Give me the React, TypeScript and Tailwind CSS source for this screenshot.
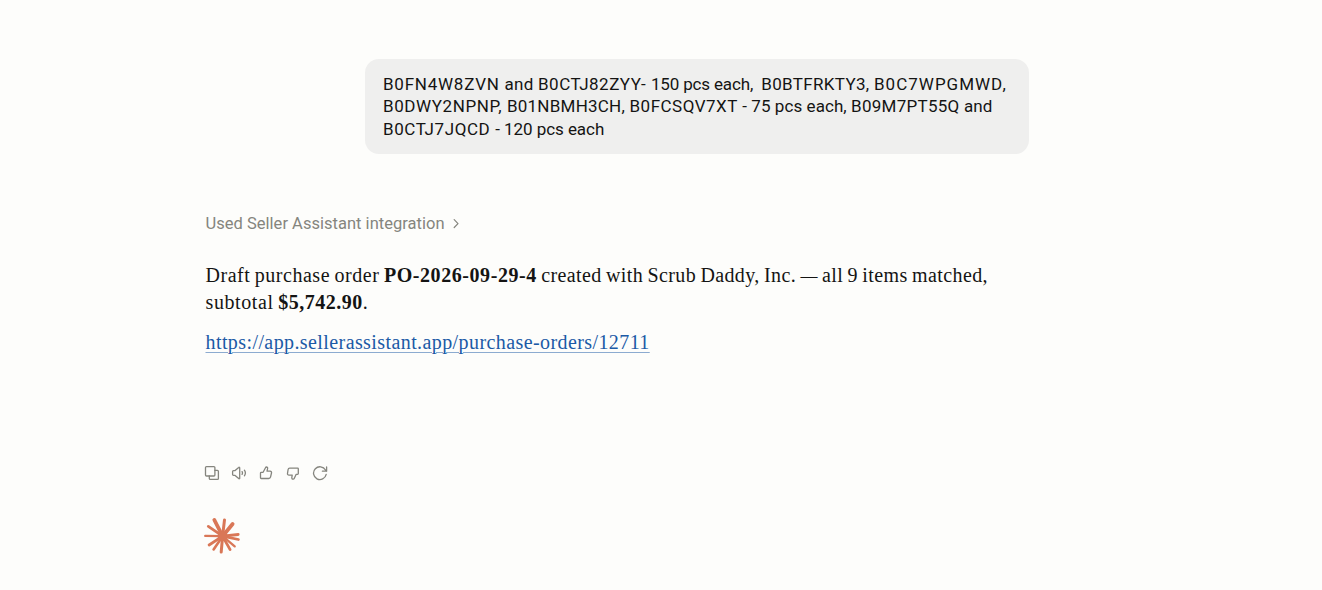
import React from "react";

function Icon({ children }: { children: React.ReactNode }) {
  return (
    <svg viewBox="0 0 16 16" className="h-4 w-4 shrink-0" fill="none" stroke="currentColor" strokeWidth={1.3} strokeLinecap="round" strokeLinejoin="round">
      {children}
    </svg>
  );
}

function MessageActions() {
  return (
    <div className="flex items-center gap-[11px] text-[#85857e]">
      <Icon>
        <rect x="1.5" y="1.6" width="9.4" height="9.4" rx="1" />
        <path d="M10.9 5.4h2.5a1 1 0 0 1 1 1v7a1 1 0 0 1-1 1H6.3a1 1 0 0 1-1-1V11" />
      </Icon>
      <Icon>
        <path d="M1.6 6.5c0-.5.4-.9.9-.9h1.6l3.6-3.2c.4-.4 1-.1 1 .4v10.4c0 .5-.6.8-1 .4l-3.6-3.2H2.5a.9.9 0 0 1-.9-.9z" />
        <path d="M11.1 6.6c.5.9.5 1.9 0 2.8M13.4 5.2c1.2 1.7 1.2 3.9 0 5.6" />
      </Icon>
      <Icon>
        <path d="M3.2 7.3h1.9l2.4-4.6c.2-.4.5-.7.9-.7.9 0 1.4.8 1.2 1.6L9 6.2h3.1c1 0 1.7.9 1.4 1.8l-1 4.2c-.2.8-.9 1.3-1.7 1.3H3.2a.7.7 0 0 1-.7-.7V8c0-.4.3-.7.7-.7z" />
      </Icon>
      <Icon>
        <path d="M12.6 9.3h-1.4l-2 4.2c-.2.5-.6.7-1.1.7-.9 0-1.4-.7-1.3-1.5l.4-2.6H4c-1 0-1.7-.8-1.5-1.8l.6-3.8c.1-.8.8-1.4 1.6-1.4h7.9c.4 0 .7.3.7.7v4.8c0 .4-.3.7-.7.7z" />
      </Icon>
      <Icon>
        <path d="M14.2 9.4A6.4 6.4 0 1 1 13.5 5l1 1.2M14.6 2v4.2h-4.2" />
      </Icon>
    </div>
  );
}

// Hand-drawn burst: every ray has its own length and weight
const RAYS: [number, number, number][] = [
  [10.3, 14.4, 2.8],
  [16.3, 7.9, 3.7],
  [26.5, 7.9, 3],
  [34.6, 12, 3.8],
  [40.2, 22.5, 2.8],
  [40.4, 27.5, 2.8],
  [36.7, 34.4, 2.3],
  [32.1, 37.6, 2.8],
  [23.2, 40.1, 3],
  [15.6, 37.4, 2.6],
  [11.1, 33, 2.8],
  [7.2, 23.9, 2.3],
];

function Burst() {
  return (
    <svg viewBox="0 0 48 48" className="h-12 w-12" stroke="#d97757" strokeLinecap="round">
      {RAYS.map(([x, y, w]) => (
        <line key={`${x}-${y}`} x1="24.6" y1="24.2" x2={x} y2={y} strokeWidth={w} />
      ))}
      <circle cx="24.6" cy="24.2" r="5" fill="#d97757" stroke="none" />
    </svg>
  );
}

export default function App() {
  return (
    <main className="h-[590px] w-[1322px] overflow-hidden bg-[#fdfdfb] pt-[59px] pl-[205px] text-[#141413]">
      <div className="flex w-[824px] flex-col">
        <div className="h-[95px] w-[664px] self-end rounded-[14px] bg-[#efefee] px-[18px] pt-[14px] font-['Roboto',sans-serif] text-[17px] leading-[22.4px] whitespace-pre">
          <div>
            <span className="tracking-[0.76px]">B0FN4W8ZVN </span>
            <span className="tracking-[0.25px]">and </span>
            <span className="tracking-[0.5px]">B0CTJ82ZYY- </span>
            <span className="tracking-[-0.15px]">150 pcs each,  </span>
            <span className="tracking-[0.33px]">B0BTFRKTY3, </span>
            <span className="tracking-[1px]">B0C7WPGMWD,</span>
          </div>
          <div>
            <span className="tracking-[0.6px]">B0DWY2NPNP, </span>
            <span className="tracking-[0.24px]">B01NBMH3CH, </span>
            <span className="tracking-[0.5px]">B0FCSQV7XT </span>
            <span className="tracking-[0.07px]">- 75 pcs each, </span>
            <span className="tracking-[0.27px]">B09M7PT55Q </span>
            <span>and</span>
          </div>
          <div>
            <span className="tracking-[0.6px]">B0CTJ7JQCD </span>
            <span className="tracking-[-0.05px]">- 120 pcs each</span>
          </div>
        </div>

        <div className="mt-[58px] flex h-6 items-center gap-1.5 pl-[0.5px] font-['Roboto',sans-serif] text-[16.5px] tracking-[0.02px] text-[#85857e]">
          <span>Used Seller Assistant integration</span>
          <svg viewBox="0 0 10 10" className="h-[10px] w-[10px]" fill="none" stroke="currentColor" strokeWidth="1.2" strokeLinecap="round" strokeLinejoin="round">
            <path d="M3.2.7l3.8 3.9-3.8 3.9" />
          </svg>
        </div>

        <div className="mt-[26px] pl-[0.5px] font-['Liberation_Serif',serif] text-[20px] leading-[27px] whitespace-nowrap [word-spacing:-1px]">
          <p>
            <span className="tracking-[0.52px]">Draft purchase order </span>
            <strong className="tracking-[0.57px]">PO-2026-09-29-4</strong>
            <span className="tracking-[0.38px]"> created with Scrub Daddy, Inc. </span>
            <span className="align-[1px] text-[17px] leading-none">—</span>
            <span className="tracking-[0.4px]"> all 9 items matched,</span>
          </p>
          <p>
            <span className="tracking-[0.6px]">subtotal </span>
            <strong className="tracking-[0.5px]">$5,742.90</strong>.
          </p>
          <p className="mt-[13px]">
            <a href="#" className="tracking-[0.41px] text-[#1b5aa6] underline decoration-[#1b5aa6]/50 decoration-1 underline-offset-[3px]">https://app.sellerassistant.app/purchase-orders/12711</a>
          </p>
        </div>

        <div className="mt-[109px] -ml-px">
          <MessageActions />
        </div>
        <div className="mt-[31px] -ml-[7px]">
          <Burst />
        </div>
      </div>
    </main>
  );
}
